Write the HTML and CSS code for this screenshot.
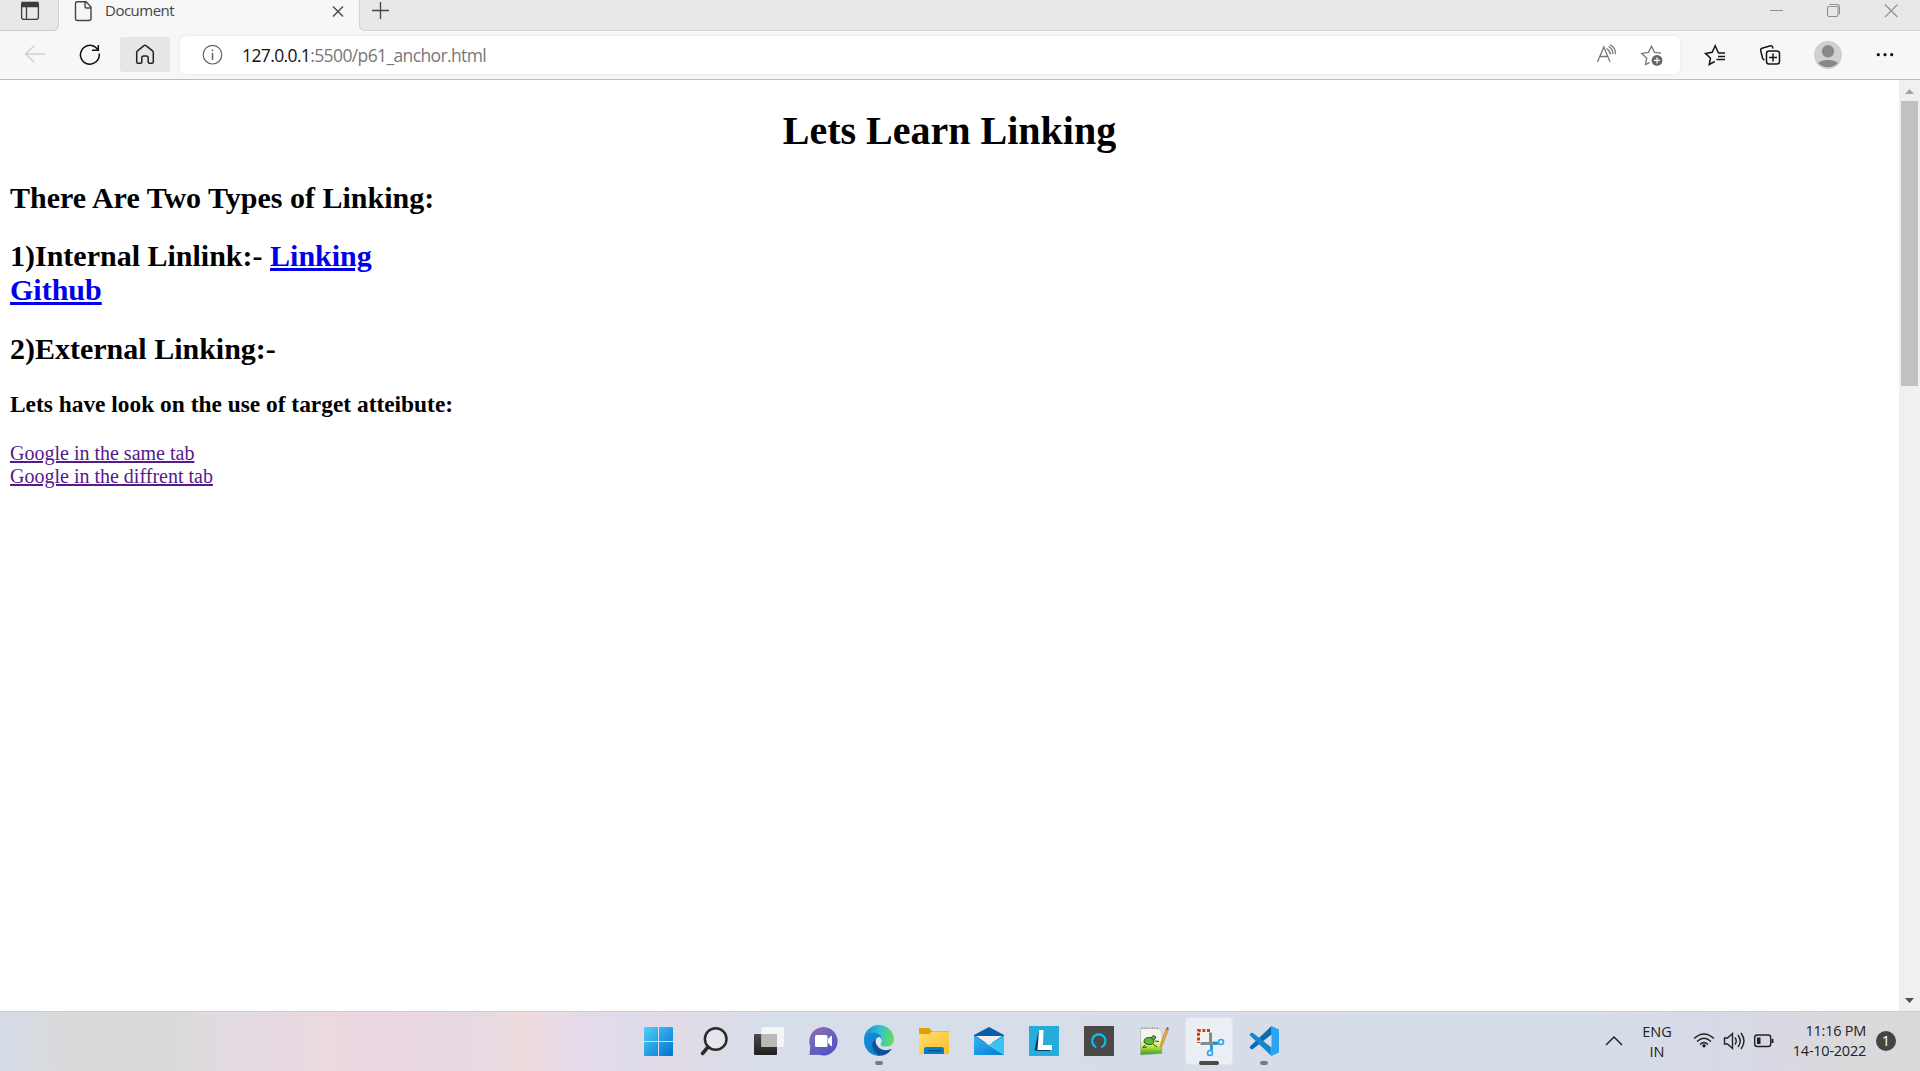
FILE: index.html
```html
<!DOCTYPE html>
<html lang="en">
<head>
<meta charset="utf-8">
<title>Document</title>
<link rel="stylesheet" href="styles.css">
</head>
<body>
<div class="screen">
  <header class="tabstrip">
    <div class="tab-actions">
      <svg width="58" height="30" viewBox="0 0 58 30" fill="none" stroke="#3b3b3b" stroke-width="1.3"><rect x="21.600" y="2.600" width="16.800" height="16.800" rx="2.500"/><path d="M22 2.500h16v4H22z" fill="#3b3b3b"/><path d="M26.500 7v12.500"/></svg>
    </div>
    <div class="tab">
      <svg width="46" height="30" viewBox="1 0 46 30" fill="none" stroke="#444" stroke-width="1.400"><path d="M19.500 1.700h8.500l5 5.300v11.500q0 2-2 2H19.500q-2 0-2-2v-15q0-1.800 2-1.800zM27 2v4.500q0 1.500 1.500 1.500H33"/></svg>
      <span class="tab-title">Document</span>
      <svg width="42" height="30" viewBox="0 0 42 30" fill="none" stroke="#444" stroke-width="1.300"><path d="M16 6.500l10 10M26 6.500l-10 10"/></svg>
    </div>
    <div class="tab-rest">
      <svg width="44" height="30" viewBox="0 0 44 30" fill="none" stroke="#444" stroke-width="1.300"><path d="M13 10.500h17M21.500 2v17"/></svg>
      <svg width="173" height="30" viewBox="1747 0 173 30" fill="none" stroke="#8f8f8f" stroke-width="1.100"><path d="M1770 10.500h13M1885 4.500l12.500 12.500M1897.500 4.500L1885 17"/><rect x="1827.500" y="6.500" width="10.500" height="10" rx="1.500"/><path d="M1829.500 4.500h7.500q2.500 0 2.500 2.500v7"/></svg>
    </div>
  </header>
  <nav class="toolbar">
    <svg width="60" height="49" viewBox="0 30 60 49" fill="none" stroke="#cfcfcf" stroke-width="1.400"><path d="M45 54H26M34.500 45.500L25.500 54l9 8.500"/></svg>
    <svg width="60" height="49" viewBox="60 30 60 49" fill="none" stroke="#111" stroke-width="1.500"><path d="M99.200 53.500a9.400 9.400 0 1 1-2.500-5.200l1.600 1.700M98.300 45v5.200H92"/></svg>
    <div class="home">
      <svg width="50" height="35" viewBox="120 37 50 35" fill="none" stroke="#222" stroke-width="1.500"><path d="M136.700 52.500q0-1 .8-1.700l6.500-5.200q1-.7 2 0l6.500 5.200q.8.700.8 1.700v9.500q0 1.300-1.300 1.300h-2.500q-1.300 0-1.300-1.300V58q0-2-2-2h-2.400q-2 0-2 2v4q0 1.300-1.300 1.300H138q-1.300 0-1.300-1.300z"/></svg>
    </div>
    <div class="address">
      <svg width="61" height="38" viewBox="180 36 61 38" fill="none" stroke="#666" stroke-width="1.200"><circle cx="212.500" cy="54.700" r="9.300"/><path d="M212.500 53v7M212.500 49.500v1.700" stroke-width="1.500"/></svg>
      <p class="url"><span class="host">127.0.0.1</span>:5500/p61_anchor.html</p>
      <svg width="90" height="38" viewBox="1590 36 90 38" fill="none" stroke="#777" stroke-width="1.300"><path d="M1597.500 62l6.300-15 6.300 15M1600 56.500h7.700M1606.500 48.500q3.500 2 4 6M1608.500 46.500q4.500 2.500 4.300 7.500M1610 44.800q6 3 5.500 9.500"/><path d="M1661 53.200l-6.500-.8-3-6.200-3 6.200-6.800 1 5 4.800-1.200 6.500 4-2"/><circle cx="1657" cy="60.400" r="5.400" fill="#666" stroke="none"/><path d="M1654 60.400h6M1657 57.400v6" stroke="#fff"/></svg>
    </div>
    <svg class="toolbar-icons" width="240" height="49" viewBox="1680 30 240 49" fill="none" stroke="#161616" stroke-width="1.500"><path d="M1725 53h-6.500l-3.300-7.200-3 6.500-6.700 1.100 5 4.800-1.300 6.300 5.500-3M1718 56.500h7M1716.500 59.500h8.500"/><path d="M1764.500 60q-1.500-.5-2-2l-1.800-7.500q-.4-1.800 1.300-2.300l8.500-2.400q1.500-.3 2 1.200l.5 1.500"/><rect x="1766.500" y="51" width="13" height="13" rx="2.500"/><path d="M1773 53.500v8M1769 57.500h8"/><circle cx="1828" cy="55" r="14" fill="#d2d0ce" stroke="none"/><circle cx="1828" cy="51.300" r="6.200" fill="#8a8886" stroke="none"/><path d="M1818.200 63.300a11 6 0 0 1 19.600 0 14 14 0 0 1-19.600 0" fill="#8a8886" stroke="none"/><g fill="#161616" stroke="none"><circle cx="1878.300" cy="54.700" r="1.600"/><circle cx="1885" cy="54.700" r="1.600"/><circle cx="1891.700" cy="54.700" r="1.600"/></g></svg>
  </nav>
  <div class="viewport">
    <main class="page">
      <h1>Lets Learn Linking</h1>
      <h2 class="types">There Are Two Types of Linking:</h2>
      <h2 class="internal">1)Internal Linlink:- <a>Linking</a><br><a>Github</a></h2>
      <h2 class="external">2)External Linking:-</h2>
      <h3>Lets have look on the use of target atteibute:</h3>
      <a class="visited same">Google in the same tab</a><br>
      <a class="visited different">Google in the diffrent tab</a>
    </main>
    <div class="scrollbar">
      <svg width="21" height="21" viewBox="0 0 21 21"><path d="M6 14l4.500-5 4.500 5z" fill="#a3a3a3"/></svg>
      <div class="thumb"></div>
      <svg class="down" width="21" height="21" viewBox="0 0 21 21"><path d="M6 8h9l-4.500 5z" fill="#505050"/></svg>
    </div>
  </div>
  <footer class="taskbar">
    <div class="apps">
      <svg viewBox="0 0 55 60"><defs><linearGradient id="win" x1="13" y1="16" x2="42" y2="45" gradientUnits="userSpaceOnUse"><stop stop-color="#4fd0fb"/><stop offset="1" stop-color="#0071ce"/></linearGradient></defs><path d="M14 16h13v14H13V17q0-1 1-1zM28 16h13q1 0 1 1v13H28zM13 31h14v14H14q-1 0-1-1zM28 31h14v13q0 1-1 1H28z" fill="url(#win)"/></svg>
      <svg viewBox="0 0 55 60" fill="none" stroke="#2b2b2b" stroke-linecap="round"><circle cx="29.700" cy="28" r="10.800" stroke-width="2.500" fill="#e5e6eb"/><path d="M22 36l-5.500 6.500" stroke-width="3.500"/></svg>
      <svg viewBox="0 0 55 60"><defs><linearGradient id="dark" x2="0" y2="1"><stop stop-color="#4b4b4b"/><stop offset="1" stop-color="#202020"/></linearGradient></defs><rect x="13" y="23" width="23" height="21" rx="1" fill="url(#dark)"/><rect x="20.500" y="16" width="22.500" height="20" rx="1" fill="#f5f5f5"/><path d="M20.500 23H36v13H20.500z" fill="#b9b9b9"/></svg>
      <svg viewBox="0 0 55 60"><defs><linearGradient id="chat" x1="0" y1="0" x2=".7" y2="1"><stop stop-color="#9a6eae"/><stop offset=".5" stop-color="#6866bd"/><stop offset="1" stop-color="#5550c8"/></linearGradient></defs><path d="M13.500 44l.7-8.500a14.200 14.200 0 1 1 8.500 8.200z" fill="url(#chat)"/><rect x="19" y="24" width="12.500" height="12" rx="1.500" fill="#fff"/><path d="M32 28l3-3q1-.5 1 .7v8.600q0 1.200-1 .7l-3-3z" fill="#fff"/></svg>
      <svg viewBox="0 0 55 60"><defs><linearGradient id="edge" x1="0" x2="1" y1=".4" y2=".5"><stop stop-color="#168bd6"/><stop offset=".5" stop-color="#32bfd7"/><stop offset="1" stop-color="#66e04d"/></linearGradient><linearGradient id="edge2" x2="1" y2="1"><stop stop-color="#168fdb"/><stop offset="1" stop-color="#0878cc"/></linearGradient></defs><path d="M13 29a15 14.500 0 0 1 30-1q0 7.500-8 7.500-6 0-6-2 2-1.500 1-5-2-6-9-5.500-5 0-8 6" fill="url(#edge)"/><path d="M13 29q1-8 10-7.300 6 .6 7.500 5-4-2-6 2.500-3 7 5 15.600A15 15 0 0 1 13 29" fill="url(#edge2)"/><path d="M24.500 28q-5.500 4-2 11 3 5 8 5.800 6-.8 10.500-7-7 3-12-.3-5-3.500-4.500-9.500" fill="#104e96"/><path d="M25 31.500q-.5-5 3.700-4.300 2.800 1 1.500 4.400-1.800 2 .2 3.200-4.500.7-5.400-3.300" fill="#e3e9f2"/><rect x="24" y="50" width="8" height="4" rx="2" fill="#777b83"/></svg>
      <svg viewBox="0 0 55 60"><defs><linearGradient id="folder" x2="1" y2="1"><stop stop-color="#ffdd6e"/><stop offset="1" stop-color="#fcc02b"/></linearGradient></defs><path d="M13 18q0-1 1-1h9l3 3h16q1 0 1 1v5H13z" fill="#dca008"/><path d="M13 23h10l3-2.500h17V43H13z" fill="url(#folder)"/><path d="M18 43v-5q0-2 2-2h16q2 0 2 2v5z" fill="#087bcf"/><rect x="21.500" y="39" width="14" height="1.200" fill="#074e8d"/></svg>
      <svg viewBox="0 0 55 60"><defs><linearGradient id="mail" x2="1" y2="1"><stop stop-color="#30b9f1"/><stop offset="1" stop-color="#0878d2"/></linearGradient></defs><path d="M13 24l15-8 15 8v8H13z" fill="#0b5caa"/><path d="M15 25h26L28 34z" fill="#f1eeee"/><path d="M13 24.500L43 44H13z" fill="url(#mail)"/><path d="M43 24.500V44L28 34z" fill="#36c5f3"/></svg>
      <svg viewBox="0 0 55 60"><path d="M13 15h30v30H13z" fill="#25acd9"/><path d="M22.500 19.500l-4 20 3 .5h13l-11-7z" fill="#08376e"/><path d="M23 19h4.500l-.5 15h9v5H21.500z" fill="#fff"/></svg>
      <svg viewBox="0 0 55 60"><path d="M13 15h30v30H13z" fill="#4b4948"/><path d="M25.300 36.200a6.700 6.700 0 1 1 5 0" fill="none" stroke="#08c4ef" stroke-width="2.200"/></svg>
      <svg viewBox="0 0 55 60"><defs><linearGradient id="note" x2="0" y2="1"><stop offset=".4" stop-color="#f3f5ef"/><stop offset=".65" stop-color="#cbed4e"/><stop offset="1" stop-color="#309a22"/></linearGradient></defs><path d="M14.500 17.500h18l3.500 3.500v21.500l-21.500 1.500z" fill="url(#note)" stroke="#aaa" stroke-width=".6"/><path d="M18 31q0-4.500 5-4.500 4 0 5 3.500-1 4-5 3.500-4 0-5-2.500M25 27l2-2.500 3 1.500-2 3" fill="#62b935" stroke="#245425" stroke-width="1"/><path d="M19 34l-2 2.500 4-.5M27 33l4 3M29 30l4 .5" fill="none" stroke="#245425" stroke-width="1"/><path d="M34.500 36l.5-4 5-14 2.300 1-5.300 14z" fill="#efb135" stroke="#9a6521" stroke-width=".5"/><path d="M40 18l1-2 1.800.8-.5 2z" fill="#9e5361"/><path d="M16 17h16" stroke="#777" stroke-dasharray="1 1.500"/></svg>
      <svg viewBox="0 0 55 60"><rect x="4.500" y="6.500" width="47" height="47" rx="4" fill="#eaeff6" stroke="#e0e5ee"/><path d="M15 17h16v17H15z" fill="#f3f1ef"/><path d="M29 19.500H17.500V32" fill="none" stroke="#d33c0b" stroke-width="3" stroke-dasharray="3 1.600"/><path d="M29.500 21.500V32h7M19.500 32.500h11" fill="none" stroke="#858b91" stroke-width="3"/><path d="M30.500 33.500v6M32 32.500h6" stroke="#168fd6" stroke-width="2.600"/><circle cx="40" cy="31" r="2.500" fill="none" stroke="#29a6e7" stroke-width="1.600"/><circle cx="29" cy="42" r="2.500" fill="none" stroke="#29a6e7" stroke-width="1.600"/><rect x="18" y="50" width="20" height="4" rx="2" fill="#4b4b4b"/></svg>
      <svg viewBox="0 0 55 60"><path d="M35.500 15L43 18.500v23L35.500 45z" fill="#2ba5f1"/><path d="M14 35.500L35.500 15v8.500L17 38q-1 .7-2 0l-1-1q-.7-.8 0-1.500" fill="#0869b5"/><path d="M14 24.500L35.500 45v-8.500L17 22q-1-.7-2 0l-1 1q-.7.800 0 1.500" fill="#1686ce"/><rect x="24" y="50" width="8" height="4" rx="2" fill="#777b83"/></svg>
    </div>
    <div class="tray">
      <svg width="40" height="60" viewBox="1594 1011 40 60" fill="none" stroke="#222" stroke-width="1.500"><path d="M1606 1045l8-8 8 8"/></svg>
      <p class="language">ENG<br>IN</p>
      <svg class="status" width="100" height="60" viewBox="1680 1011 100 60" fill="none" stroke="#222" stroke-width="1.400"><path d="M1694 1038.500q10-9 20 0M1697 1041.500q7-6.500 14 0M1700 1044.500q4-4 8 0"/><circle cx="1704" cy="1045.700" r="1.700" fill="#222" stroke="none"/><path d="M1724.500 1038h3l5-4.500v15l-5-4.500h-3zM1735 1037.500q2.500 3.500 0 7M1738 1035q4.500 6 0 12M1741 1033q6 8 0 16"/><rect x="1754.700" y="1035" width="16" height="11.500" rx="2.500"/><path d="M1757 1037.500h3.500v6.500h-3.500z" fill="#222" stroke="none"/><path d="M1772.500 1039v4" stroke-width="2"/></svg>
      <p class="clock"><span class="time">11:16 PM</span><br><span class="date">14-10-2022</span></p>
      <span class="badge">1</span>
    </div>
  </footer>
</div>
</body>
</html>
```
FILE: styles.css
```css
* { box-sizing: border-box; }
body { margin: 0; background: #fff; font-family: "Open Sans", "Noto Sans", sans-serif; }
svg { display: block; flex: none; }
p { margin: 0; }
.screen { width: 1920px; height: 1071px; display: flex; flex-direction: column; overflow: hidden; }
.tabstrip { height: 31px; display: flex; background: #f7f7f7; flex: none; }
.tab-actions { width: 59px; background: #e8e8e8; border: solid #cfcfcf; border-width: 0 1px 1px 0; border-radius: 0 0 6px 0; }
.tab { width: 300px; display: flex; }
.tab-title { width: 212px; font-size: 15px; line-height: 21px; color: #444; letter-spacing: -0.5px; }
.tab-rest { flex: 1; display: flex; justify-content: space-between; background: #e8e8e8; border: solid #d3d3d3; border-width: 0 0 1px 1px; border-radius: 0 0 0 6px; }
.tab-rest svg:first-child { margin-left: -1px; }
.toolbar { height: 49px; display: flex; align-items: flex-start; flex: none; background: #f7f7f7; border-bottom: 1px solid #bdbdbd; }
.toolbar > svg { margin-top: -1px; }
.home { width: 50px; height: 35px; margin: 6px 10px 0 0; border-radius: 3px; background: #e6e6e6; }
.address { width: 1500px; height: 38px; margin-top: 5px; display: flex; border-radius: 6px; background: #fff; box-shadow: 0 0 4px #eaeaea; }
.url { flex: 1; padding-left: 1px; font-size: 17.500px; line-height: 38px; letter-spacing: -0.62px; color: #777; white-space: nowrap; }
.host { color: #111; }
.viewport { height: 931px; display: flex; flex: none; }
.page { flex: 1; padding: 28px 10px 0; font: 20px/23px "Liberation Serif", serif; color: #000; }
h1 { margin: 0 0 27px; font-size: 40px; line-height: 46px; text-align: center; }
h2 { margin: 0 0 25px; font-size: 30px; line-height: 34px; }
.types { margin-bottom: 24px; }
h3 { margin: 0 0 24px; font-size: 23.400px; line-height: 27px; }
.page a { color: #00e; text-decoration: underline; }
.page .visited { color: #551a8b; }
.scrollbar { width: 21px; background: #f0f0f0; display: flex; flex-direction: column; }
.thumb { width: 17px; height: 285px; margin-left: 2px; background: #c1c1c1; }
.down { margin-top: auto; }
.taskbar { height: 60px; flex: none; display: flex; justify-content: space-between; padding: 0 24px 0 631px; border-top: 1px solid #cccfd7; background: linear-gradient(90deg, #d5dbe7 0, #dadada 70px, #dadada 170px, #e4dae3 240px, #ead9e0 320px, #e8d6e2 410px, #e7dae2 480px, #ecdbdc 525px, #e6daea 580px, #dfdbeb 625px, #e2dae7 670px, #d6deea 770px, #d6dde9 1300px, #d5dde9 1600px, #d8d9e5 1760px, #dadadb 1860px, #d9d9d9 1920px); }
.apps { display: grid; grid-template-columns: repeat(12, 55px); margin-top: -1px; }
.apps svg { width: 55px; height: 60px; }
.tray { display: flex; margin-top: -1px; color: #222; font-size: 14.500px; line-height: 20px; }
.language { width: 46px; padding-top: 11px; text-align: center; }
.clock { width: 86px; padding-top: 10px; text-align: right; white-space: nowrap; letter-spacing: -0.25px; }
.badge { width: 20px; height: 20px; margin: 20px 0 0 10px; border-radius: 50%; background: #444; color: #fff; font-size: 14.500px; text-align: center; }
```
